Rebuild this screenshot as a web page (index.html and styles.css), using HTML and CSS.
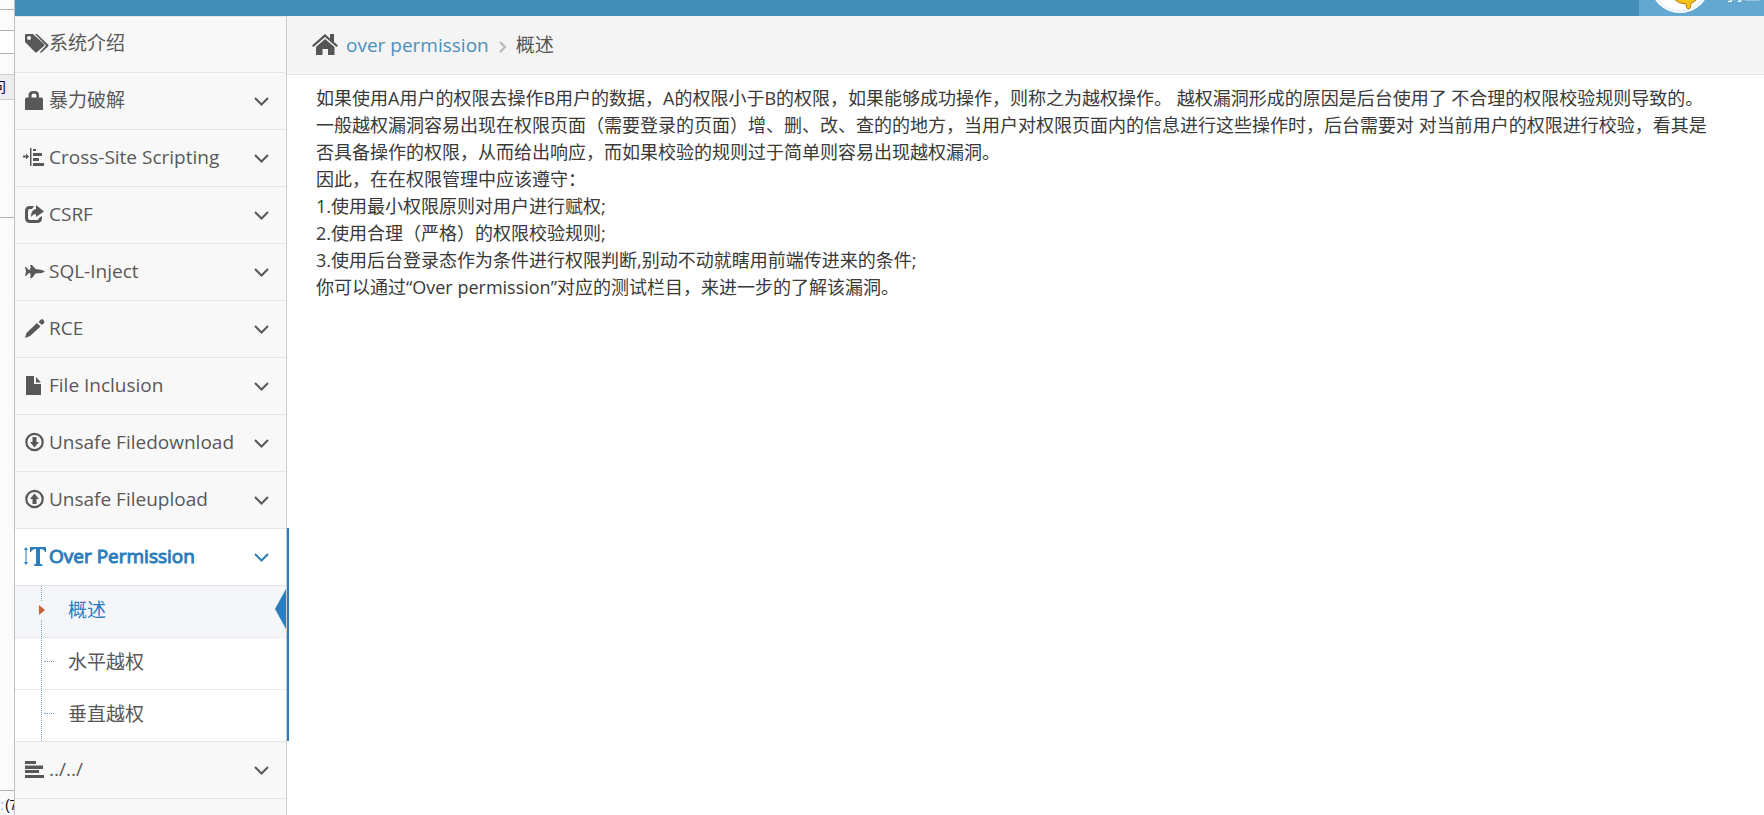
FILE: index.html
```html
<!DOCTYPE html>
<html lang="zh-CN">
<head>
<meta charset="utf-8">
<title>over permission</title>
<link rel="stylesheet" href="styles.css">
</head>
<body>
<div class="screen">
<aside class="edge">
  <div class="edge-cell edge-a"></div>
  <div class="edge-cell edge-b"></div>
  <div class="edge-cell edge-c"></div>
  <div class="edge-cell edge-d"></div>
  <div class="edge-cell edge-e"><span>问</span></div>
  <div class="edge-cell edge-f"></div>
  <div class="edge-cell edge-g"></div>
  <div class="edge-cell edge-h"><span class="edge-link">:</span><span>(7</span></div>
</aside>
<div class="app">
  <header class="topbar">
    <a class="user" href="#">
      <svg class="avatar" viewBox="0 0 60 60" aria-hidden="true"><circle cx="30" cy="30" r="30" fill="#fff"/><circle cx="30" cy="30" r="28" fill="none" stroke="#d8e6ef"/><path d="M17 30L44 40L46 47Q43 50 41 50Q41 56 38 56Q36 55 36 51Q29 51 24 46Q18 48 17 30z" fill="#f9c21b" stroke="#b07a12"/></svg>
      <span>骑士</span>
    </a>
  </header>
  <div class="body">
    <nav class="sidebar">
      <ul class="menu">
        <li class="item"><a class="row" href="#"><svg class="icon" viewBox="0 0 24 20"><path fill-rule="evenodd" d="M0 2Q0 1 1 1H8L19 11Q20 12 19 13L12 19Q11 20 10 19L0 9zM4 3a2 2 0 1 0 .1 0zM10 1H12L23 11.500Q24 12.500 23 13.500L16 20L15 19L21 12.500z"/></svg><span>系统介绍</span></a></li>
        <li class="item"><a class="row" href="#"><svg class="icon" viewBox="0 0 24 20"><path fill-rule="evenodd" d="M0 9Q0 7.500 2 7.500H3.500V5Q3.500 1 8.500 1H9.500Q14 1 14 5V7.500H16Q18 7.500 18 9V20H0zM6.500 7.500H11.500V5.500Q11.500 3.500 9 3.500T6.500 5.500z"/></svg><span>暴力破解</span><svg class="chev" viewBox="0 0 15 9"><path d="M1 1l6.500 6.500L14 1"/></svg></a></li>
        <li class="item"><a class="row" href="#"><svg class="icon" viewBox="0 0 24 20"><path d="M-2 8.500H1V6.500L4 9.500L1 12.500V10.500H-2zM5 1H6.500V19H5zM8 2H11V4H8zM8 6H17V9H8zM8 11H14V14H8zM8 16H19V19H8z"/></svg><span>Cross-Site Scripting</span><svg class="chev" viewBox="0 0 15 9"><path d="M1 1l6.500 6.500L14 1"/></svg></a></li>
        <li class="item"><a class="row" href="#"><svg class="icon" viewBox="0 0 24 20"><path d="M9 2H5Q0 2 0 7V14Q0 19 5 19H12Q17 19 17 14V12L14 14Q14 16 12 16H5Q3 16 3 14V7Q3 5 5 5H7zM11 1L19 7.500L11 13V10Q8 10 6 13Q6 5.500 11 5z"/></svg><span>CSRF</span><svg class="chev" viewBox="0 0 15 9"><path d="M1 1l6.500 6.500L14 1"/></svg></a></li>
        <li class="item"><a class="row" href="#"><svg class="icon" viewBox="0 0 24 20"><path d="M0 6H1L4 9H5V7H6L5 4H7L10.500 8L17 9L20 10.500L17 12L10.500 12.500L7 17H5L6 13.500H5V12H4L1 15H0L1 10.500z"/></svg><span>SQL-Inject</span><svg class="chev" viewBox="0 0 15 9"><path d="M1 1l6.500 6.500L14 1"/></svg></a></li>
        <li class="item"><a class="row" href="#"><svg class="icon" viewBox="0 0 24 20"><path d="M0 20L1.500 15L12 5L15.500 8.500L5 18zM13.500 4L16 1.500Q17 .5 18 1.500L19 3Q20 4 19 5L17 7z"/></svg><span>RCE</span><svg class="chev" viewBox="0 0 15 9"><path d="M1 1l6.500 6.500L14 1"/></svg></a></li>
        <li class="item"><a class="row" href="#"><svg class="icon" viewBox="0 0 24 20"><path d="M1 1H9V9H16V20H1zM11 2L16 7.500H11z"/></svg><span>File Inclusion</span><svg class="chev" viewBox="0 0 15 9"><path d="M1 1l6.500 6.500L14 1"/></svg></a></li>
        <li class="item"><a class="row" href="#"><svg class="icon" viewBox="0 0 24 20"><circle class="ring" cx="9.500" cy="10" r="8.200"/><path d="M7.500 5H11.500V10H14L9.500 15.500L5 10H7.500z"/></svg><span>Unsafe Filedownload</span><svg class="chev" viewBox="0 0 15 9"><path d="M1 1l6.500 6.500L14 1"/></svg></a></li>
        <li class="item"><a class="row" href="#"><svg class="icon" viewBox="0 0 24 20"><circle class="ring" cx="9.500" cy="10" r="8.200"/><path d="M7.500 15H11.500V10H14L9.500 4.500L5 10H7.500z"/></svg><span>Unsafe Fileupload</span><svg class="chev" viewBox="0 0 15 9"><path d="M1 1l6.500 6.500L14 1"/></svg></a></li>
        <li class="item open"><a class="row" href="#"><svg class="icon" viewBox="0 0 24 20"><path d="M-1 4L1 1L3 4H1.500V16H3L1 19L-1 16H.5V4zM5 1H21V6H20Q19 3 15 3V17Q15 18.500 17.500 18.500V20H9V18.500Q11 18.500 11 17V3Q7 3 6 6H5z"/></svg><span>Over Permission</span><svg class="chev" viewBox="0 0 15 9"><path d="M1 1l6.500 6.500L14 1"/></svg></a>
          <ul class="submenu">
            <li class="sub current"><a href="#">概述</a></li>
            <li class="sub"><a href="#">水平越权</a></li>
            <li class="sub"><a href="#">垂直越权</a></li>
          </ul>
        </li>
        <li class="item"><a class="row" href="#"><svg class="icon" viewBox="0 0 24 20"><path d="M0 2H11V5H0zM0 6.500H18V10H0zM0 11H14V14H0zM0 16H19V19H0z"/></svg><span>../../</span><svg class="chev" viewBox="0 0 15 9"><path d="M1 1l6.500 6.500L14 1"/></svg></a></li>
      </ul>
    </nav>
    <main class="main">
      <div class="crumbs">
        <svg class="home" viewBox="0 0 26 22"><path d="M13 0L18 4.500V0H22V8L26 11.500L24.500 13L13 3L1.500 13L0 11.500zM13 5L22.500 13V21H16V15H10.500V21H4V13z"/></svg>
        <a href="#">over permission</a>
        <svg class="sep" viewBox="0 0 7 12"><path d="M1 1l5 5-5 5"/></svg>
        <span>概述</span>
      </div>
      <div class="article">
        如果使用A用户的权限去操作B用户的数据，A的权限小于B的权限，如果能够成功操作，则称之为越权操作。 越权漏洞形成的原因是后台使用了 不合理的权限校验规则导致的。<br>
        一般越权漏洞容易出现在权限页面（需要登录的页面）增、删、改、查的的地方，当用户对权限页面内的信息进行这些操作时，后台需要对 对当前用户的权限进行校验，看其是否具备操作的权限，从而给出响应，而如果校验的规则过于简单则容易出现越权漏洞。<br>
        因此，在在权限管理中应该遵守：<br>
        1.使用最小权限原则对用户进行赋权;<br>
        2.使用合理（严格）的权限校验规则;<br>
        3.使用后台登录态作为条件进行权限判断,别动不动就瞎用前端传进来的条件;<br>
        你可以通过“Over permission”对应的测试栏目，来进一步的了解该漏洞。
      </div>
    </main>
  </div>
</div>
</div>
</body>
</html>
```
FILE: styles.css
```css
* { box-sizing: border-box; }
body { margin: 0; background: #fff; color: #393939; font-family: "Open Sans", "Noto Sans CJK SC", sans-serif; font-size: 19px; line-height: 27px; }
a { color: inherit; text-decoration: none; }
ul { margin: 0; padding: 0; list-style: none; }
svg { flex: none; fill: currentColor; overflow: visible; }

.screen { display: flex; height: 100vh; overflow: hidden; }

.edge { display: flex; flex-direction: column; flex: none; width: 15px; border-right: 1px solid #c0c0c0; background: #fbfbfb; color: #000; font-family: "Liberation Sans", "Noto Sans CJK SC", sans-serif; font-size: 14px; line-height: 24px; }
.edge-cell { display: flex; justify-content: flex-end; flex: none; overflow: hidden; border-bottom: 1px solid #b4b0b0; }
.edge-a { height: 10px; }
.edge-b { height: 21px; }
.edge-c { height: 23px; background: #fff; }
.edge-d { height: 21px; border-color: #ccc; }
.edge-e { height: 25px; padding-right: 8px; background: #ededed; border-color: #ccc; }
.edge-f { height: 118px; }
.edge-g { flex: 1; }
.edge-h { justify-content: flex-start; height: 24px; gap: 1px; padding-top: 2px; border: 0; }
.edge-h span { flex: none; }
.edge-link { color: #6db8ef; }

.app { display: flex; flex: 1; flex-direction: column; min-width: 0; }
.topbar { display: flex; flex: none; justify-content: flex-end; align-items: flex-end; height: 16px; overflow: hidden; background: #438eb9; }
.user { display: flex; flex: none; align-items: flex-end; gap: 15px; height: 60px; width: 125px; padding: 0 0 3px 11px; background: #62a8d1; color: #fff; font-size: 18px; white-space: nowrap; }
.user span { padding-bottom: 6px; }
.avatar { width: 60px; height: 60px; }

.body { display: flex; flex: 1; min-height: 0; }
.sidebar { flex: none; width: 272px; background: #f8f8f8; border-right: 1px solid #ccc; box-shadow: inset 0 1px #e5e5e5; color: #585858; }
.item { position: relative; border-bottom: 1px solid #e5e5e5; }
.row { display: flex; align-items: center; height: 56px; padding: 0 17px 2px 10px; }
.icon { width: 24px; height: 20px; }
.ring { fill: none; stroke: currentColor; stroke-width: 2.2; }
.chev { width: 15px; height: 9px; margin: 2px 0 0 auto; fill: none; stroke: currentColor; stroke-width: 2; }
.open { background: #fff; }
.open > .row { color: #2b7dbc; }
.open > .row span { -webkit-text-stroke: 1px; }
.open::after { content: ""; position: absolute; top: -1px; bottom: 0; right: -3px; width: 2px; background: #2b7dbc; }
.submenu { border-top: 1px solid #e5e5e5; }
.sub { position: relative; border-top: 1px dotted #d8d8d8; }
.sub:first-child { border-top: 0; }
.sub a { display: block; padding: 11px 0 13px 53px; }
.sub::before { content: ""; position: absolute; top: 0; bottom: 0; left: 26px; border-left: 1px dotted #7fa3bf; }
.sub::after { content: ""; position: absolute; top: 23px; left: 29px; width: 10px; border-top: 1px dotted #7fa3bf; }
.current { background: #f4f6fa; color: #2b7dbc; }
.current::before { bottom: 36px; }
.current::after { top: 19px; left: 24px; width: 6px; height: 10px; border: 0; background: #c86139; clip-path: polygon(0 0, 100% 50%, 0 100%); }
.current a::after { content: ""; position: absolute; top: 3px; right: 0; width: 11px; height: 40px; background: #2b7dbc; clip-path: polygon(100% 0, 100% 100%, 0 50%); }
.current a::before { content: ""; position: absolute; top: 34px; bottom: 0; left: 26px; border-left: 1px dotted #7fa3bf; }

.main { flex: 1; min-width: 0; }
.crumbs { display: flex; align-items: center; height: 59px; padding: 0 25px; background: #f4f4f4; border-bottom: 1px solid #e5e5e5; color: #555; }
.home { width: 26px; height: 22px; margin-right: 8px; }
.crumbs a { color: #4c8fbd; }
.sep { width: 7px; height: 12px; margin: 4px 10px 0; fill: none; stroke: #b2b6bf; stroke-width: 2; }
.article { padding: 10px 45px 10px 29px; font-size: 18px; }
```
